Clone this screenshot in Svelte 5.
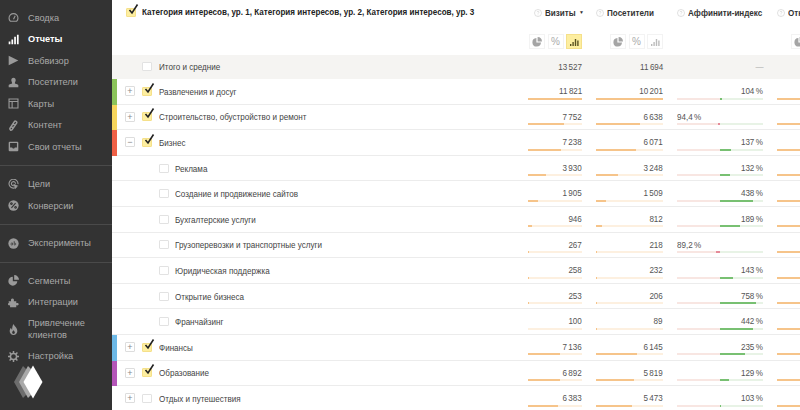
<script>
    const nav = [
        [
            { name: "Сводка", icon: "gauge" },
            { name: "Отчеты", icon: "bars", active: true },
            { name: "Вебвизор", icon: "play" },
            { name: "Посетители", icon: "person" },
            { name: "Карты", icon: "map" },
            { name: "Контент", icon: "pen" },
            { name: "Свои отчеты", icon: "inbox" },
        ],
        [
            { name: "Цели", icon: "target" },
            { name: "Конверсии", icon: "percent" },
        ],
        [{ name: "Эксперименты", icon: "ab" }],
        [
            { name: "Сегменты", icon: "pie" },
            { name: "Интеграции", icon: "puzzle" },
            { name: "Привлечение клиентов", icon: "flame", tall: true },
            { name: "Настройка", icon: "gear" },
        ],
    ];

    // v / u are bar widths in %, a is the affinity bar in px from the centre
    const rows = [
        { label: "Развлечения и досуг", color: "#8bc45a", open: "+", on: true, visits: "11 821", v: 100, users: "10 201", u: 100, aff: "104 %", a: 2 },
        { label: "Строительство, обустройство и ремонт", color: "#f6d55c", open: "+", on: true, visits: "7 752", v: 66, users: "6 638", u: 66, aff: "94,4 %", a: -2 },
        { label: "Бизнес", color: "#ef5f45", open: "−", on: true, visits: "7 238", v: 61, users: "6 071", u: 60, aff: "137 %", a: 11 },
        { label: "Реклама", child: true, visits: "3 930", v: 33, users: "3 248", u: 33, aff: "132 %", a: 10 },
        { label: "Создание и продвижение сайтов", child: true, visits: "1 905", v: 18, users: "1 509", u: 15, aff: "438 %", a: 33 },
        { label: "Бухгалтерские услуги", child: true, visits: "946", v: 7, users: "812", u: 9, aff: "189 %", a: 20 },
        { label: "Грузоперевозки и транспортные услуги", child: true, visits: "267", v: 2, users: "218", u: 2, aff: "89,2 %", a: -4 },
        { label: "Юридическая поддержка", child: true, visits: "258", v: 1, users: "232", u: 2, aff: "143 %", a: 13 },
        { label: "Открытие бизнеса", child: true, visits: "253", v: 1, users: "206", u: 2, aff: "758 %", a: 36 },
        { label: "Франчайзинг", child: true, visits: "100", v: 0, users: "89", u: 2, aff: "442 %", a: 33 },
        { label: "Финансы", color: "#6cb8e6", open: "+", on: true, visits: "7 136", v: 60, users: "6 145", u: 61, aff: "235 %", a: 25 },
        { label: "Образование", color: "#b455b8", open: "+", on: true, visits: "6 892", v: 60, users: "5 819", u: 57, aff: "129 %", a: 9 },
        { label: "Отдых и путешествия", open: "+", visits: "6 383", v: 55, users: "5 473", u: 54, aff: "103 %", a: 1 },
    ];
</script>

{#snippet help()}
    <svg class="help" viewBox="0 0 8 8"><circle cx="4" cy="4" r="3.5" /><path d="M3 3.2c0-1.200 2-1.200 2 0 0 .8-1 .7-1 1.500M4 5.600v.6" /></svg>
{/snippet}

{#snippet pie()}
    <span class="tool">
        <svg viewBox="0 0 10 10"><path class="solid" d="M4.400 1a4.300 4.300 0 1 0 4.600 4.600H4.400zM5.600 0v4.400H10A4.600 4.600 0 0 0 5.600 0z" /></svg>
    </span>
{/snippet}

{#snippet tools(active)}
    <div class="tools">
        {@render pie()}
        <span class="tool pct">%</span>
        <span class="tool" class:active>
            <svg viewBox="0 0 10 10"><path class="barsicon" d="M1 7h1.400v2H1zM3.400 5h1.400v4H3.400zM5.800 2h1.400v7H5.800zM8.200 3.500h1.400V9H8.200z" /></svg>
        </span>
    </div>
{/snippet}

{#snippet check(on)}
    <span class="box" class:on>
        {#if on}
            <svg viewBox="0 0 12 12"><path d="M2.500 6l2.500 3L10.500 0.500" /></svg>
        {/if}
    </span>
{/snippet}

<div class="page">
    <aside class="sidebar">
        {#each nav as section}
            <div class="section">
                {#each section as item}
                    <div class="item" class:active={item.active} class:tall={item.tall}>
                        <svg class="icon" viewBox="0 0 16 16">
                            {#if item.icon === "gauge"}
                                <path class="line" d="M3.500 13.500A6.500 6.500 0 1 1 12.500 13.500z" /><path class="line" d="M8 10.500L10.500 5.500" />
                            {:else if item.icon === "bars"}
                                <path d="M1 11h2.500v4H1zM5 8h2.500v7H5zM9 4h2.500v11H9zM13 1h2.500v14H13z" />
                            {:else if item.icon === "play"}
                                <path d="M1 1l14 7-14 7z" />
                            {:else if item.icon === "person"}
                                <path d="M8 1c2.200 0 3.200 1.600 3.200 3.500S10 8 10 9c0 1 4.500 1.300 5 2.500V15H1v-3.500C1.500 10.300 6 10 6 9S4.800 6.400 4.800 4.500 5.800 1 8 1z" />
                            {:else if item.icon === "map"}
                                <path class="line" d="M1.500 1.500h13v13h-13zM1.500 5h13M6 5v9.500" />
                            {:else if item.icon === "pen"}
                                <path class="line heavy" d="M4 15c-1-1-1.500-2-1.200-3L9.500 2c1-1.200 3.800 .6 3.200 2.200L6 14zM5 10l3.500 2M7.500 6l3.500 2" />
                            {:else if item.icon === "inbox"}
                                <path d="M2.500 1h11A1.500 1.500 0 0 1 15 2.500v11a1.500 1.500 0 0 1-1.500 1.500h-11A1.500 1.500 0 0 1 1 13.500v-11A1.500 1.500 0 0 1 2.500 1zM3 3v6.500h3L7 11h2l1-1.500h3V3z" fill-rule="evenodd" />
                            {:else if item.icon === "target"}
                                <path class="line" d="M13 11A6.500 6.500 0 1 1 14.500 7.500M10.500 8.500A3 3 0 1 1 11 7" /><path d="M7.500 7l8 3-3.200 1.200L11 15z" />
                            {:else if item.icon === "percent"}
                                <circle cx="8" cy="8" r="7.500" /><path class="cut" d="M5 11.500l6-7M5 4a1.200 1.200 0 1 0 .01 0M11 9.500a1.200 1.200 0 1 0 .01 0" />
                            {:else if item.icon === "ab"}
                                <circle cx="8" cy="8" r="7.500" /><path class="cut thin" d="M6.500 7.500a1.500 1.500 0 1 0 0 2.500V7M9 4.500V10a1.500 1.500 0 1 0 0-2.500" />
                            {:else if item.icon === "pie"}
                                <path d="M7 2.500A6.500 6.500 0 1 0 13.500 9H7zM9 0v7h7a7 7 0 0 0-7-7z" />
                            {:else if item.icon === "puzzle"}
                                <path d="M1 6h3.500C4 4 4.500 2 6.500 2S9 4 8.500 6H12v3c2-.5 3.500 0 3.500 1.500S14 12.500 12 12v3H3v-3C1.500 12.500 0 12 0 10.500S1 8.500 3 9L1 8z" />
                            {:else if item.icon === "flame"}
                                <path d="M8 0c1 3 5.500 5 5.500 10A5.500 5.500 0 0 1 8 16a5.500 5.500 0 0 1-5.500-6c0-2 1-3.500 2-4.500 0 1.500.5 2.500 1.500 3C6 5 6.500 2.500 8 0zM8 9c-1 1.200-2 2-2 3.500a2 2 0 0 0 4 0C10 11 9 10.200 8 9z" fill-rule="evenodd" />
                            {:else if item.icon === "gear"}
                                <circle class="line heavy" cx="8" cy="8" r="4.500" /><path class="line heavy" d="M8 0v3M8 13v3M0 8h3M13 8h3M2.300 2.300l2.100 2.100M11.600 11.600l2.100 2.100M2.300 13.700l2.100-2.100M11.600 4.400l2.100-2.100" />
                            {/if}
                        </svg>
                        <span>{item.name}</span>
                    </div>
                {/each}
            </div>
        {/each}

        <svg class="logo" viewBox="0 0 30 34">
            <path fill="#6d6d6d" d="M10 1L1 17l9 16 4-4-5-12 5-12z" />
            <path fill="#a9a9a9" d="M15 1L6 17l9 16 4-4-5-12 5-12z" />
            <path fill="#fff" d="M20 0.500l9.500 16.500L20 33.500 10.500 17z" />
        </svg>
    </aside>

    <main class="report">
        <header class="row head">
            <div class="title">
                {@render check(true)}
                <b>Категория интересов, ур. 1, Категория интересов, ур. 2, Категория интересов, ур. 3</b>
            </div>
            <div class="metric">
                <div class="name shifted">{@render help()}<b>Визиты</b><i class="sort">▼</i></div>
                {@render tools(true)}
            </div>
            <div class="metric">
                <div class="name">{@render help()}<b>Посетители</b></div>
                {@render tools(false)}
            </div>
            <div class="metric">
                <div class="name">{@render help()}<b>Аффинити-индекс</b></div>
            </div>
            <div class="metric">
                <div class="name">{@render help()}<b>Отказы</b></div>
                <div class="tools nudge">{@render pie()}</div>
            </div>
        </header>

        <div class="row total">
            <div class="dim">
                <span class="slot"></span>
                {@render check(false)}
                <span class="label">Итого и средние</span>
            </div>
            <div class="num"><span>13 527</span></div>
            <div class="num"><span>11 694</span></div>
            <div class="num dash"><span>—</span></div>
            <div></div>
        </div>

        {#each rows as r}
            <div class="row line">
                <div class="dim" class:child={r.child}>
                    {#if r.color}<span class="strip" style="background: {r.color}"></span>{/if}
                    {#if !r.child}
                        <span class="slot">{#if r.open}<span class="expand">{r.open}</span>{/if}</span>
                    {/if}
                    {@render check(r.on)}
                    <span class="label">{r.label}</span>
                </div>
                <div class="cell">
                    <div class="num"><span>{r.visits}</span></div>
                    <div class="track"><div class="fill" style="width: {r.v}%"></div></div>
                </div>
                <div class="cell">
                    <div class="num"><span>{r.users}</span></div>
                    <div class="track"><div class="fill" style="width: {r.u}%"></div></div>
                </div>
                <div class="cell">
                    <div class="num" class:low={r.a < 0}><span>{r.aff}</span></div>
                    <div class="split">
                        <div class="half neg">{#if r.a < 0}<div class="red" style="width: {-r.a}px"></div>{/if}</div>
                        <div class="half pos">{#if r.a > 0}<div class="green" style="width: {r.a}px"></div>{/if}</div>
                    </div>
                </div>
                <div class="cell">
                    <div class="num"></div>
                    <div class="track"><div class="fill full"></div></div>
                </div>
            </div>
        {/each}
    </main>
</div>

<style>
    :global(body) {
        margin: 0;
        background: #fff;
    }

    .page {
        display: flex;
        width: 800px;
        height: 410px;
        overflow: hidden;
        font-family: "Liberation Sans", Arial, sans-serif;
        color: #444;
    }

    /* SIDEBAR */
    .sidebar {
        position: relative;
        flex: 0 0 112px;
        background: #333;
        color: #aaa;
        font-size: 9.2px;
    }

    .section {
        padding: 7.5px 0;
        border-bottom: 1px solid #4a4a4a;
        box-sizing: border-box;
    }

    .section:first-child {
        padding-top: 7px;
    }

    .section:last-of-type {
        border-bottom: 0;
    }

    .item {
        display: flex;
        align-items: center;
        height: 21.5px;
        gap: 9px;
        padding-left: 8px;
    }

    .item.tall {
        height: 32.5px;
        line-height: 12px;
    }

    .item.tall span {
        width: 70px;
    }

    .item.active {
        color: #fff;
        font-weight: bold;
    }

    .icon {
        flex: none;
        width: 11px;
        height: 11px;
        fill: #9a9a9a;
    }

    .active .icon {
        fill: #fff;
    }

    .icon .line {
        fill: none;
        stroke: #9a9a9a;
        stroke-width: 1.6;
    }

    .icon .heavy {
        stroke-width: 2.2;
    }

    .icon .cut {
        fill: none;
        stroke: #333;
        stroke-width: 1.6;
    }

    .icon .thin {
        stroke-width: 1;
    }

    .logo {
        position: absolute;
        left: 13px;
        top: 365px;
        width: 30px;
        height: 34px;
    }

    /* TABLE */
    .report {
        flex: 1;
        min-width: 0;
    }

    .row {
        display: grid;
        grid-template-columns: 402px 54px 67px 86px 40px;
        column-gap: 14px;
        box-sizing: border-box;
    }

    .head {
        height: 55px;
    }

    /* the report text is narrower than any installed face, so it is squeezed */
    .title b,
    .name b,
    .label,
    .num span {
        display: inline-block;
        white-space: nowrap;
        transform: scaleX(0.85);
        transform-origin: left center;
    }

    .title {
        display: flex;
        align-items: flex-start;
        gap: 6px;
        padding: 8px 0 0 14px;
        font-size: 9.5px;
        color: #222;
        white-space: nowrap;
    }

    .title b {
        line-height: 10px;
        margin-top: -1px;
    }

    .metric {
        display: flex;
        flex-direction: column;
        justify-content: space-between;
        padding: 7px 0 6px;
        min-width: 0;
    }

    .name {
        display: flex;
        align-items: center;
        gap: 2px;
        font-size: 9.5px;
        color: #333;
        white-space: nowrap;
        line-height: 11px;
    }

    .name.shifted {
        padding-left: 6px;
    }

    .sort {
        font-style: normal;
        font-size: 5px;
        margin-left: -4px;
    }

    .help {
        flex: none;
        width: 8px;
        height: 8px;
        margin-right: 1px;
        fill: none;
        stroke: #ccc;
        stroke-width: 0.6;
    }

    .tools {
        display: flex;
        justify-content: flex-end;
        gap: 2.5px;
        width: 100%;
    }

    .tools.nudge {
        justify-content: flex-start;
        padding-left: 14px;
    }

    .tool {
        display: flex;
        align-items: center;
        justify-content: center;
        width: 16px;
        height: 15px;
        box-sizing: border-box;
        border: 1px solid #f3f3f3;
        font-size: 10px;
        color: #aaa;
    }

    .tool svg {
        width: 10px;
        height: 10px;
    }

    .solid {
        fill: #a5a5a5;
    }

    .barsicon {
        fill: #bbb;
    }

    .tool.active {
        background: #fdeea0;
        border-color: #f5e08a;
    }

    .tool.active .barsicon {
        fill: #5a5220;
    }

    .total {
        height: 24px;
        padding-bottom: 1px;
        background: #f5f4f2;
        align-items: center;
    }

    .line {
        height: 25.6px;
        border-bottom: 1px solid #ececec;
    }

    .dim {
        position: relative;
        display: flex;
        align-items: center;
        padding-left: 13px;
        min-width: 0;
    }

    .dim.child {
        padding-left: 47px;
    }

    .strip {
        position: absolute;
        left: 0;
        top: 0;
        bottom: -1px;
        width: 5px;
    }

    .slot {
        flex: none;
        width: 17px;
        display: flex;
    }

    .expand {
        display: flex;
        align-items: center;
        justify-content: center;
        box-sizing: border-box;
        width: 10px;
        height: 10px;
        border: 1px solid #ddd;
        border-radius: 1px;
        font-size: 9px;
        line-height: 8px;
        color: #888;
    }

    .box {
        position: relative;
        flex: none;
        box-sizing: border-box;
        width: 10px;
        height: 9px;
        border: 1px solid #e2e2e2;
        border-radius: 1px;
        background: #fff;
    }

    .box.on {
        border-color: #f5e08a;
        background: #fdeea0;
    }

    .box svg {
        position: absolute;
        left: 0;
        top: -5px;
        width: 12px;
        height: 12px;
        fill: none;
        stroke: #222;
        stroke-width: 1.6;
    }

    .label {
        margin-left: 6.5px;
        font-size: 9.5px;
        color: #444;
    }

    .dim.child .label {
        margin-left: 6px;
    }

    .cell {
        display: flex;
        flex-direction: column;
        padding-top: 6px;
        min-width: 0;
    }

    .num {
        height: 12px;
        line-height: 12px;
        font-size: 9.5px;
        word-spacing: -1px;
        text-align: right;
        color: #555;
    }

    .num span {
        transform-origin: right center;
    }

    .num.low {
        text-align: left;
    }

    .num.low span {
        transform-origin: left center;
    }

    .num.dash {
        color: #aaa;
    }

    .track {
        display: flex;
        height: 2px;
        margin-top: 0.5px;
        background: #fdf0e0;
    }

    .fill {
        height: 2px;
        background: #f6c48a;
    }

    .fill.full {
        width: 100%;
    }

    .split {
        display: flex;
        height: 2px;
        margin-top: 0.5px;
    }

    .half {
        flex: 1;
        display: flex;
    }

    .neg {
        background: #f8e6e2;
        justify-content: flex-end;
    }

    .pos {
        background: #e8f3e6;
    }

    .red {
        background: #e58a98;
    }

    .green {
        background: #78c072;
    }
</style>
